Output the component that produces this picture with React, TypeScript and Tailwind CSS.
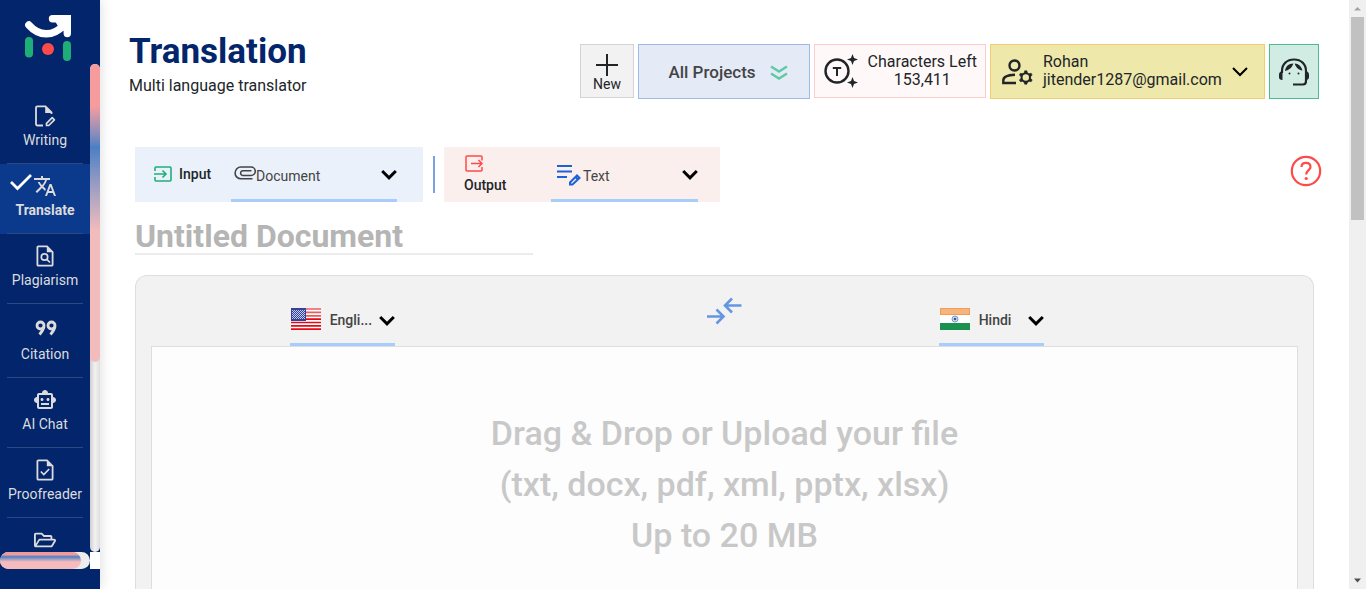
import type { ReactNode } from "react";
import { MdTranslate, MdOutlineSmartToy } from "react-icons/md";
import { FaRegFolderOpen } from "react-icons/fa";

function Logo() {
  return (
    <svg viewBox="0 0 46 46" className="h-[46px] w-[46px]" fill="none" aria-hidden="true">
      <path d="M3.8 10C14 21.500 28 22 39 10" stroke="#fff" strokeWidth="7.400" strokeLinecap="round" />
      <path d="M27.500 3.700H42.300V18.500" stroke="#fff" strokeWidth="7.400" strokeLinecap="round" strokeLinejoin="miter" />
      <path d="M30 6L42 4V18L34 13Z" fill="#fff" />
      <rect x="0" y="22" width="8" height="20.500" rx="4" fill="#1fae77" />
      <rect x="38" y="26" width="8" height="20" rx="4" fill="#1fae77" />
      <circle cx="23" cy="34" r="6" fill="#ff4a4a" />
    </svg>
  );
}

function EditDocumentIcon() {
  return (
    <svg viewBox="0 0 22 22" className="h-[22px] w-[22px]" fill="none" aria-hidden="true">
      <path d="M9 20.500H3.500A1.500 1.500 0 0 1 2 19V2.800A1.500 1.500 0 0 1 3.500 1.300H11.500L17.500 7.300V9" stroke="currentColor" strokeWidth="1.800" />
      <path d="M11.200 1V8H18.300Z" fill="currentColor" />
      <path d="M12.500 20.500V18.300L18.200 12.600L20.400 14.800L14.700 20.500Z" stroke="currentColor" strokeWidth="1.700" strokeLinejoin="round" />
    </svg>
  );
}

function DocumentIcon({ children }: { children: ReactNode }) {
  return (
    <svg viewBox="0 0 18 22" className="h-[22px] w-[18px]" fill="none" stroke="currentColor" aria-hidden="true">
      <path d="M11 1.400H2.500A1 1 0 0 0 1.400 2.500V19.500A1 1 0 0 0 2.500 20.600H15.500A1 1 0 0 0 16.600 19.500V7Z" strokeWidth="1.800" />
      <path d="M10.800 1V7.200H17.200Z" fill="currentColor" stroke="none" />
      {children}
    </svg>
  );
}

function QuoteIcon() {
  return (
    <svg viewBox="0 0 22 16" className="ml-[2px] h-4 w-[22px]" fill="none" stroke="currentColor" aria-hidden="true">
      <circle cx="5.500" cy="5.500" r="3.500" strokeWidth="2.800" />
      <path d="M9 6.500C8.600 9.500 7 11.500 4.500 14.500" strokeWidth="2.800" />
      <circle cx="16.500" cy="5.500" r="3.500" strokeWidth="2.800" />
      <path d="M20 6.500C19.600 9.500 18 11.500 15.500 14.500" strokeWidth="2.800" />
    </svg>
  );
}

function ManageAccountIcon() {
  const teeth = [0, 60, 120, 180, 240, 300];
  return (
    <svg viewBox="0 0 31 26" className="h-[26px] w-[31px] shrink-0" fill="none" stroke="#212529" strokeWidth="2.400" aria-hidden="true">
      <circle cx="12.500" cy="6.500" r="5" />
      <path d="M14 24H1.300V21.500C1.300 18 6 16 13 15.800" />
      <circle cx="23.800" cy="18.500" r="4.200" strokeWidth="2" />
      {teeth.map((angle) => (
        <path key={angle} d="M22.200 14.200L22.700 11.800H24.900L25.400 14.200Z" fill="#212529" stroke="#212529" strokeWidth="0.600" transform={`rotate(${angle} 23.800 18.500)`} />
      ))}
    </svg>
  );
}

function PaperclipIcon() {
  return (
    <svg viewBox="0 0 22 14" className="h-[14px] w-[22px] shrink-0" fill="none" stroke="#444" strokeWidth="1.600" aria-hidden="true">
      <path d="M18.500 12.800H7A5.900 5.900 0 0 1 7 1H17A4 4 0 0 1 17 9.500H8.500A2.400 2.400 0 0 1 8.500 4.800H17.500" />
    </svg>
  );
}

function Chevron() {
  return (
    <svg viewBox="0 0 16 12" className="pointer-events-none mt-1 h-3 w-4 shrink-0" fill="none" aria-hidden="true">
      <path d="M1.200 2L8 8.800L14.800 2" stroke="#000" strokeWidth="3" />
    </svg>
  );
}

const navItems: { label: string; icon: ReactNode; active?: boolean; tall?: boolean; iconOnly?: boolean }[] = [
  { label: "Writing", icon: <EditDocumentIcon /> },
  { label: "Translate", icon: <MdTranslate size={24} />, active: true },
  {
    label: "Plagiarism",
    icon: (
      <DocumentIcon>
        <circle cx="8.500" cy="12" r="3.200" strokeWidth="1.700" />
        <path d="M10.800 14.300L14 17.500" strokeWidth="1.700" />
      </DocumentIcon>
    ),
  },
  { label: "Citation", icon: <QuoteIcon />, tall: true },
  { label: "AI Chat", icon: <MdOutlineSmartToy size={24} /> },
  {
    label: "Proofreader",
    icon: (
      <DocumentIcon>
        <path d="M4.800 12.500L7.800 15.500L13.200 10" strokeWidth="1.700" />
      </DocumentIcon>
    ),
  },
  { label: "Files", icon: <FaRegFolderOpen size={22} />, iconOnly: true },
];

function Sidebar() {
  return (
    <aside className="z-10 flex h-full w-[100px] shrink-0 flex-col bg-[#03256c] pb-5 shadow-[0_0_12px_rgba(0,0,0,0.15)]">
      <a href="#home" aria-label="Home" className="flex h-16 shrink-0 items-start pl-[25px] pt-[15px]">
        <Logo />
      </a>
      <div className="flex min-h-0 flex-1">
        <nav className="min-w-0 flex-1 overflow-hidden pt-[30px]">
          {navItems.map((item) => (
            <a
              key={item.label}
              href={`#${item.label.toLowerCase()}`}
              aria-label={item.label}
              className={`relative flex flex-col items-center text-sm leading-5 text-[#dcdcdc] ${
                item.tall ? "h-[74px]" : "h-[70px]"
              } ${item.active ? "bg-[#0b398b] font-bold" : ""}`}
            >
              {item.active && (
                <svg viewBox="0 0 24 18" className="absolute left-[9px] top-[9px] h-[18px] w-6" fill="none" aria-hidden="true">
                  <path d="M2 9L8.500 15.500L22 2" stroke="#fff" strokeWidth="2.800" />
                </svg>
              )}
              <span className={`mt-[11px] flex items-center justify-center ${item.tall ? "h-[26px]" : "h-[22px]"}`}>
                {item.icon}
              </span>
              {!item.iconOnly && <span className="mt-[3px]">{item.label}</span>}
              <span className="mx-[7px] mt-auto h-px self-stretch bg-[#2c4983]" />
            </a>
          ))}
        </nav>
        <div className="w-[10px] rounded-full bg-linear-to-r from-[#cfcfcf] via-[#f2f2f2] to-[#dedede]">
          <div className="h-[61%] rounded-full bg-linear-to-b from-[#f79c9d] from-14% via-[#4a7fc3] via-28% to-[#f3bcbc] to-56%" />
        </div>
      </div>
      <div className="flex h-[17px] shrink-0">
        <div className="flex-1 rounded-full bg-linear-to-r from-[#d0d0d0] to-[#eeeeee]">
          <div className="h-full w-[90%] rounded-full bg-linear-to-b from-[#f09a9c] from-15% via-[#4a7fc3] via-28% to-[#f6bcbd] to-58%" />
        </div>
        <div className="w-[10px] bg-white" />
      </div>
    </aside>
  );
}

function Header() {
  return (
    <header className="flex items-start justify-between pl-[29px] pr-[30px] pt-[30px]">
      <div>
        <h1 className="text-[35px] leading-[44px] font-bold text-[#03256c]">Translation</h1>
        <p className="text-base leading-6 text-[#212529]">Multi language translator</p>
      </div>
      <div className="mt-[14px] flex items-start gap-1 text-base leading-[18px] text-[#212529]">
        <button className="flex h-[54px] w-[54px] flex-col items-center border border-[#d3d3d3] bg-[#f2f2f2] pt-[9px] text-sm leading-4">
          <svg viewBox="0 0 22 22" className="h-[22px] w-[22px]" aria-hidden="true">
            <path d="M11 0V22M0 11H22" stroke="#212529" strokeWidth="2" />
          </svg>
          New
        </button>
        <button className="flex h-[55px] w-[172px] items-center justify-center gap-[14px] border border-[#9dbae8] bg-[#e4ebf7] pl-2 text-[17px] font-medium text-[#444]">
          All Projects
          <svg viewBox="0 0 18 16" className="mt-[3px] h-4 w-[18px]" fill="none" stroke="#5fc9a3" strokeWidth="2.400" aria-hidden="true">
            <path d="M1 1.500L9 6.500L17 1.500M1 8.500L9 13.500L17 8.500" />
          </svg>
        </button>
        <div className="flex h-[54px] w-[172px] items-center justify-between border border-[#fdcdcd] bg-[#fff8f8] pl-[9px] pr-2">
          <svg viewBox="0 0 34 34" className="h-[34px] w-[34px]" fill="none" aria-hidden="true">
            <circle cx="13" cy="17" r="11.500" stroke="#212529" strokeWidth="2.400" />
            <path d="M8.800 14H17.200M13 14V22" stroke="#212529" strokeWidth="2" />
            <path d="M28.500 0L30 4L34 5.500L30 7L28.500 11L27 7L23 5.500L27 4ZM28.500 23L30 27L34 28.500L30 30L28.500 34L27 30L23 28.500L27 27Z" fill="#212529" />
          </svg>
          <span className="text-center">
            Characters Left
            <br />
            153,411
          </span>
        </div>
        <button className="flex h-[55px] w-[275px] items-center border border-[#f4cc6c] bg-[#eee8aa] pl-[11px] pr-4 text-left">
          <ManageAccountIcon />
          <span className="ml-[10px] flex-1 pb-px">
            Rohan
            <br />
            jitender1287@gmail.com
          </span>
          <svg viewBox="0 0 16 10" className="h-[10px] w-4" fill="none" aria-hidden="true">
            <path d="M1 1L8 8L15 1" stroke="#000" strokeWidth="2" />
          </svg>
        </button>
        <button aria-label="Support" className="flex h-[55px] w-[50px] items-center justify-center border border-[#4dbb94] bg-[#d1ede3]">
          <svg viewBox="0 0 30 28" className="h-7 w-[30px]" fill="none" aria-hidden="true">
            <path d="M3 15V13C3 6 8 1.500 15 1.500S27 6 27 13V23C27 25.500 26 26.500 24 26.500H14" stroke="#212529" strokeWidth="2.200" />
            <path d="M3.500 13.500H2.500C1 13.500 0 15 0 17V19C0 21 1 22 3.500 22ZM26.500 13.500H27.500C29 13.500 30 15 30 17V19C30 21 29 22 26.500 22Z" fill="#212529" />
            <path d="M6 13C6.500 8.500 9.500 5.500 14.300 5.500C13.500 9 10.500 12 6 13ZM15.700 5.500C19.500 5.500 22.500 8.500 23.500 12.500C19.500 12 16.500 9 15.700 5.500Z" fill="#212529" />
            <circle cx="10.500" cy="15.500" r="1" fill="#212529" />
            <circle cx="19.500" cy="15.500" r="1" fill="#212529" />
          </svg>
        </button>
      </div>
    </header>
  );
}

function Toolbar() {
  return (
    <div className="mt-12 flex h-[55px] items-center pl-[35px] pr-[27px] text-sm">
      <div className="flex h-full w-72 bg-[#eaf1fa] pl-[19px] pr-[26px]">
        <label htmlFor="input-kind" className="flex w-[77px] items-center gap-[7px] pb-[2px] font-medium text-[#212529]">
          <svg viewBox="0 0 18 16" className="h-4 w-[18px]" fill="none" stroke="#1fae77" strokeWidth="1.600" aria-hidden="true">
            <path d="M1 5V2A1 1 0 0 1 2 1H16A1 1 0 0 1 17 2V14A1 1 0 0 1 16 15H2A1 1 0 0 1 1 14V11" />
            <path d="M0 8H12M8.500 4.500L12 8L8.500 11.500" />
          </svg>
          Input
        </label>
        <div className="flex w-[166px] items-center border-b-[3px] border-[#a9cdfb] pl-[3px]">
          <PaperclipIcon />
          <select id="input-kind" className="-mr-4 h-full min-w-0 flex-1 appearance-none bg-transparent pt-[6px] text-[#444]">
            <option>Document</option>
          </select>
          <Chevron />
        </div>
      </div>
      <div className="mx-[9px] h-[37px] w-[3px] border-r-2 border-[#7ba0e4]" />
      <div className="flex h-full w-[276px] bg-[#fbefee] pl-5 pr-[22px]">
        <label htmlFor="output-kind" className="flex w-[87px] flex-col gap-[2px] pt-2 font-medium leading-5 text-[#212529]">
          <svg viewBox="0 0 18 18" className="ml-[1px] h-[18px] w-[18px]" fill="none" stroke="#ff4a4a" strokeWidth="1.500" aria-hidden="true">
            <path d="M17 5.500V2A1 1 0 0 0 16 1H2A1 1 0 0 0 1 2V15A1 1 0 0 0 2 16H16A1 1 0 0 0 17 15V12" />
            <path d="M6 8.500H17M13.500 5L17 8.500L13.500 12" />
          </svg>
          Output
        </label>
        <div className="flex w-[147px] items-center border-b-[3px] border-[#a9cdfb] pl-[6px]">
          <svg viewBox="0 0 24 22" className="mt-1 h-[22px] w-6 shrink-0" fill="none" stroke="#1b62d6" strokeWidth="2" aria-hidden="true">
            <path d="M0 2H15M0 7.500H15M0 13H10" />
            <path d="M13 20.500V18.500L20 11.500L22.500 14L15.500 20.500Z" />
            <path d="M18.500 13L21 15.500" />
          </svg>
          <select id="output-kind" className="-mr-4 h-full min-w-0 flex-1 appearance-none bg-transparent pl-[2px] pt-[6px] text-[#444]">
            <option>Text</option>
          </select>
          <Chevron />
        </div>
      </div>
      <button aria-label="Help" className="mb-2 ml-auto">
        <svg viewBox="0 0 32 32" className="h-8 w-8" fill="none" aria-hidden="true">
          <circle cx="16" cy="16" r="14.200" stroke="#ff4a4a" strokeWidth="2.200" />
          <path d="M11.500 12C11.500 9 13.500 7.800 16 7.800S20.500 9.300 20.500 12C20.500 15 16.200 15.500 16.200 19.500" stroke="#ff4a4a" strokeWidth="2.200" />
          <circle cx="16.200" cy="23.500" r="1.600" fill="#ff4a4a" />
        </svg>
      </button>
    </div>
  );
}

function UsFlag() {
  return (
    <svg viewBox="0 0 30 22" className="h-[22px] w-[30px] shrink-0" aria-hidden="true">
      <rect width="30" height="22" fill="#fff" />
      <path d="M0 1H30M0 4.400H30M0 7.800H30" stroke="#ec5a60" strokeWidth="1.700" />
      <path d="M0 11.200H30M0 14.500H30M0 17.900H30M0 21.200H30" stroke="#e30a17" strokeWidth="1.700" />
      <rect width="15" height="13" fill="#34439a" />
      <path d="M1 2.500H14M1 4.500H14M1 6.500H14M1 8.500H14M1 10.500H14" stroke="#c5cbe8" strokeWidth="1" strokeDasharray="1 1" />
      <path d="M2 3.500H14M2 5.500H14M2 7.500H14M2 9.500H14" stroke="#c5cbe8" strokeWidth="1" strokeDasharray="1 1" />
    </svg>
  );
}

function IndiaFlag() {
  return (
    <svg viewBox="0 0 30 22" className="h-[22px] w-[30px] shrink-0" aria-hidden="true">
      <rect width="30" height="22" fill="#fff" />
      <rect width="30" height="7" fill="#f39c57" />
      <rect x="1" y="1" width="28" height="5" fill="#f6b47f" />
      <rect y="15" width="30" height="7" fill="#1b9150" />
      <circle cx="15" cy="11" r="3" fill="#d4def0" stroke="#7b98cc" />
      <circle cx="15" cy="11" r="1.300" fill="#2c5aa8" />
    </svg>
  );
}

function LanguageSelect(props: { id: string; label: string; value: string; flag: ReactNode }) {
  return (
    <div className="flex h-[52px] w-[105px] items-center border-b-[3px] border-[#a9cdfb] pl-[1px]">
      {props.flag}
      <select
        id={props.id}
        aria-label={props.label}
        className="-mr-4 h-full min-w-0 flex-1 appearance-none bg-transparent pl-[9px] pt-[2px] text-sm font-medium text-[#444]"
      >
        <option>{props.value}</option>
      </select>
      <Chevron />
    </div>
  );
}

function Workspace() {
  return (
    <section className="ml-[35px] mr-[35px] mt-5 flex min-h-0 flex-1 flex-col rounded-t-xl border border-b-0 border-[#dedede] bg-[#f2f2f2] px-[15px]">
      <div className="grid h-[70px] shrink-0 grid-cols-3 items-end">
        <div className="flex justify-center">
          <LanguageSelect id="source-language" label="Source language" value="Engli..." flag={<UsFlag />} />
        </div>
        <button aria-label="Swap languages" className="mb-[21px] justify-self-center">
          <svg viewBox="0 0 36 28" className="h-7 w-9" fill="none" stroke="#6695e2" strokeWidth="2.600" aria-hidden="true">
            <path d="M35.500 8.500H19M26 1.500L19 8.500L26 15.500M1 19.500H17.500M10.500 12.500L17.500 19.500L10.500 26.500" />
          </svg>
        </button>
        <div className="flex pl-[23px]">
          <LanguageSelect id="target-language" label="Target language" value="Hindi" flag={<IndiaFlag />} />
        </div>
      </div>
      <label className="block min-h-0 flex-1 cursor-pointer border border-b-0 border-[#dedede] bg-[#fdfdfd] pt-[61px] text-center text-[34px] leading-[51px] font-medium text-[#c8c8c8]">
        <input type="file" className="sr-only" />
        Drag &amp; Drop or Upload your file
        <br />
        (txt, docx, pdf, xml, pptx, xlsx)
        <br />
        Up to 20 MB
      </label>
    </section>
  );
}

function PageScrollbar() {
  return (
    <div className="flex h-full w-[17px] shrink-0 flex-col items-center bg-[#f0f0f0]" aria-hidden="true">
      <svg viewBox="0 0 17 17" className="h-[17px] w-[17px] shrink-0">
        <path d="M5 10.500L8.500 7L12 10.500Z" fill="#a3a3a3" />
      </svg>
      <div className="h-[203px] w-[13px] bg-[#c1c1c1]" />
      <svg viewBox="0 0 17 17" className="mt-auto h-[17px] w-[17px] shrink-0">
        <path d="M5 6.500L8.500 10.500L12 6.500Z" fill="#505050" />
      </svg>
    </div>
  );
}

export default function App() {
  return (
    <div className="flex h-screen overflow-hidden bg-white font-['Roboto',sans-serif]">
      <Sidebar />
      <main className="flex min-w-0 flex-1 flex-col">
        <Header />
        <Toolbar />
        <input
          aria-label="Document title"
          placeholder="Untitled Document"
          className="ml-[35px] mt-[13px] h-10 w-[398px] shrink-0 border-b-2 border-[#ececec] pt-1 text-[32px] font-bold placeholder:text-[#b5b5b5]"
        />
        <Workspace />
      </main>
      <PageScrollbar />
    </div>
  );
}
